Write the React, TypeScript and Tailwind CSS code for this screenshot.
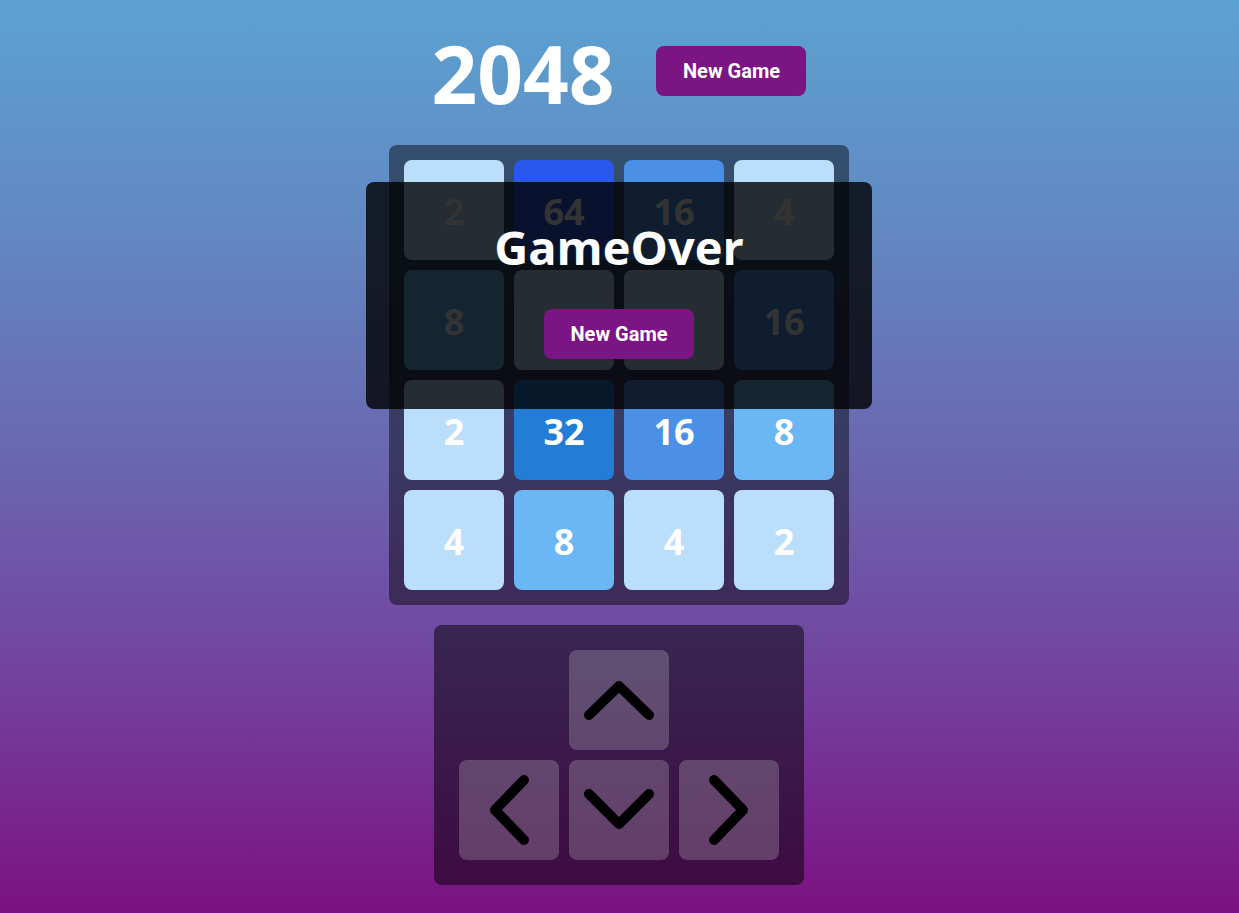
import React from "react";

const tiles: number[] = [2, 64, 16, 4, 8, 0, 0, 16, 2, 32, 16, 8, 4, 8, 4, 2];

function tileClass(v: number): string {
  switch (v) {
    case 2:
    case 4:
      return "bg-[#bbdefa]";
    case 8:
      return "bg-[#6bb6f4]";
    case 16:
      return "bg-[#4a90e6]";
    case 32:
      return "bg-[#237dd7]";
    case 64:
      return "bg-[#2959ec]";
    default:
      return "bg-[#bbdefa]";
  }
}

function Chevron({ points }: { points: string }) {
  return (
    <svg width="100" height="100" viewBox="0 0 100 100" fill="none">
      <polyline
        points={points}
        stroke="black"
        strokeWidth="10"
        strokeLinecap="round"
        strokeLinejoin="round"
      />
    </svg>
  );
}

function Btn({ children }: { children: React.ReactNode }) {
  return (
    <button className="w-[150px] h-[50px] rounded-lg bg-[#7b1583] text-white text-[20px] font-bold font-['Roboto',sans-serif] flex items-center justify-center">
      {children}
    </button>
  );
}

export default function App() {
  return (
    <div className="min-h-screen w-full bg-[linear-gradient(180deg,#5ca2d1_0%,#6288c2_25%,#6a67b0_50%,#73419d_75%,#7c1181_100%)] flex flex-col items-center pt-[33px] pr-[1px] font-['Open_Sans',sans-serif]">
      <div className="flex items-center gap-[42px] h-[80px]">
        <h1 className="text-[80px] leading-none font-bold text-white">2048</h1>
        <div className="-mt-[4px]">
          <Btn>New Game</Btn>
        </div>
      </div>

      <div className="relative mt-[32px] w-[460px] h-[460px] rounded-lg bg-black/45 p-[15px]">
        <div className="grid grid-cols-4 gap-[10px]">
          {tiles.map((v, i) => (
            <div
              key={i}
              className={`w-[100px] h-[100px] pt-[4px] rounded-lg flex items-center justify-center text-white text-[36px] font-bold ${tileClass(v)}`}
            >
              {v > 0 ? v : ""}
            </div>
          ))}
        </div>
        <div className="absolute left-[-23px] top-[37px] w-[506px] h-[227px] rounded-lg bg-black/80 flex flex-col items-center pt-[42px]">
          <div className="text-white text-[47px] leading-none font-bold">GameOver</div>
          <div className="mt-[38px]">
            <Btn>New Game</Btn>
          </div>
        </div>
      </div>

      <div className="mt-[20px] w-[370px] h-[260px] rounded-lg bg-black/50 p-[25px] grid grid-cols-3 gap-[10px] content-start">
        <div />
        <button className="w-[100px] h-[100px] rounded-lg bg-white/20 flex items-center justify-center">
          <Chevron points="20,65 50,36 80,65" />
        </button>
        <div />
        <button className="w-[100px] h-[100px] rounded-lg bg-white/20 flex items-center justify-center">
          <Chevron points="65,20 36,50 65,80" />
        </button>
        <button className="w-[100px] h-[100px] rounded-lg bg-white/20 flex items-center justify-center">
          <Chevron points="20,34 50,64 80,34" />
        </button>
        <button className="w-[100px] h-[100px] rounded-lg bg-white/20 flex items-center justify-center">
          <Chevron points="35,20 64,50 35,80" />
        </button>
      </div>
    </div>
  );
}
